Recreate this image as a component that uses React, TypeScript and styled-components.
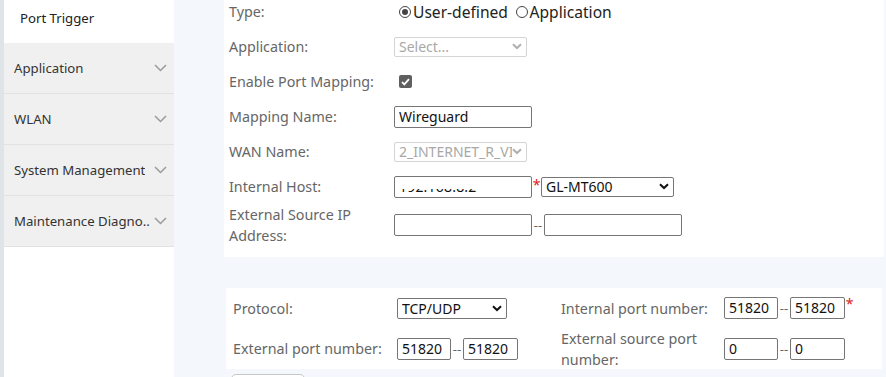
import React from "react";
import styled, { createGlobalStyle } from "styled-components";

const Global = createGlobalStyle`
  html, body { margin: 0; padding: 0; overflow: hidden; }
  body { font-family: "Noto Sans", "Open Sans", sans-serif; background: #f4f7fb; }
  * { box-sizing: border-box; }
`;

const Page = styled.div`
  display: flex;
  width: 886px;
  height: 377px;
  overflow: hidden;
  background: #f4f7fb;
`;

const EdgeStrip = styled.div`
  width: 4px;
  flex: none;
  background: #dfe4e9;
`;

const Sidebar = styled.nav`
  width: 170px;
  flex: none;
  background: #fff;
  display: flex;
  flex-direction: column;
`;

const SubItem = styled.div`
  height: 43px;
  display: flex;
  align-items: center;
  padding: 0 0 7px 16px;
  font-size: 13.2px;
  color: #222;
  background: #fff;
`;

const MenuItem = styled.div`
  height: 51px;
  display: flex;
  align-items: center;
  justify-content: space-between;
  padding: 0 7px 0 10px;
  background: #f0f0f0;
  border-bottom: 1px solid #e2e2e2;
  font-size: 13.2px;
  color: #333;
`;

const MenuText = styled.span`
  white-space: nowrap;
  overflow: hidden;
  max-width: 138px;
`;

const Chevron = () => (
  <svg width="13" height="8" viewBox="0 0 13 8" fill="none">
    <path d="M1 1l5.5 5.5L12 1" stroke="#9a9a9a" strokeWidth="1.5" />
  </svg>
);

const Main = styled.main`
  flex: 1;
  padding-left: 50px;
  display: flex;
  flex-direction: column;
`;

const TopCard = styled.section`
  margin-top: -6px;
  width: 660px;
  background: #fff;
  padding: 0 0 18px 5px;
  display: grid;
  grid-template-columns: 165px auto;
  grid-auto-rows: 35px;
`;

const BottomCard = styled.section`
  margin-top: 31px;
  margin-left: 2px;
  width: 656px;
  background: #fff;
  padding: 0 0 0 7px;
  display: grid;
  grid-template-columns: 164px 164px 163px auto;
  grid-template-rows: 40px 41px;
`;

const Label = styled.div`
  display: flex;
  align-items: center;
  font-size: 14.3px;
  line-height: 21px;
  color: #666;
`;

const Field = styled.div`
  display: flex;
  align-items: center;
  font-size: 14px;
  color: #111;
`;

const TallRow = styled.div`
  grid-column: 1 / -1;
  display: grid;
  grid-template-columns: 165px auto;
  height: 42px;
`;

const RadioOpt = styled.label`
  display: inline-flex;
  align-items: center;
  gap: 2px;
  margin-left: 5px;
  margin-right: -1px;
  font-size: 15.6px;
  color: #222;
`;

const RadioDot = styled.span<{ $on?: boolean }>`
  width: 12px;
  height: 12px;
  border-radius: 50%;
  border: 1px solid #444;
  display: inline-flex;
  align-items: center;
  justify-content: center;
  &::after {
    content: "";
    width: 6px;
    height: 6px;
    border-radius: 50%;
    background: ${(p) => (p.$on ? "#444" : "transparent")};
  }
`;

const Check = styled.span`
  margin-left: 5px;
  width: 13px;
  height: 13px;
  border-radius: 2px;
  background: #5f5f5f;
  display: inline-flex;
  align-items: center;
  justify-content: center;
`;

const FakeSelect = styled.div<{ $w: number; $disabled?: boolean; $h?: number }>`
  width: ${(p) => p.$w}px;
  height: ${(p) => p.$h ?? 20}px;
  border: 1px solid ${(p) => (p.$disabled ? "#d4d4d4" : "#767676")};
  border-radius: 2px;
  display: flex;
  align-items: center;
  justify-content: space-between;
  padding: 0 4px 0 4px;
  font-size: 14px;
  color: ${(p) => (p.$disabled ? "#a8a8a8" : "#111")};
  background: #fff;
  white-space: nowrap;
  overflow: hidden;
`;

const SelText = styled.span`
  overflow: hidden;
`;

const Caret = ({ color }: { color: string }) => (
  <svg width="10" height="7" viewBox="0 0 10 7" style={{ flex: "none" }}>
    <path d="M1 1.2l4 3.8 4-3.8" stroke={color} strokeWidth="2" fill="none" />
  </svg>
);

const TextBox = styled.div<{ $w: number }>`
  width: ${(p) => p.$w}px;
  height: 22px;
  border: 1px solid #767676;
  border-radius: 2px;
  padding: 0 4px;
  font-size: 14px;
  line-height: 20px;
  color: #111;
  background: #fff;
  overflow: hidden;
  white-space: nowrap;
`;

const Clipped = styled.span`
  display: block;
  clip-path: inset(12.5px 0 0 0);
  letter-spacing: 0.2px;
`;

const Dash = styled.span`
  width: 12px;
  text-align: center;
  font-size: 13px;
  color: #666;
`;

const Star = styled.span`
  color: #e02020;
  font-size: 14px;
  width: 9px;
  text-align: center;
  align-self: flex-start;
  margin-top: 6px;
`;

const AddBtn = styled.button`
  margin: 5px 0 0 7px;
  width: 74px;
  height: 32px;
  padding-top: 10px;
  background: #fff;
  border: 1px solid #c8c8c8;
  border-radius: 5px;
  font-family: inherit;
  font-size: 13px;
`;

export default function App() {
  return (
    <>
      <Global />
      <Page>
        <EdgeStrip />
        <Sidebar>
          <SubItem>Port Trigger</SubItem>
          {["Application", "WLAN", "System Management", "Maintenance Diagno.."].map((t) => (
            <MenuItem key={t}>
              <MenuText>{t}</MenuText>
              <Chevron />
            </MenuItem>
          ))}
        </Sidebar>
        <Main>
          <TopCard>
            <Label>Type:</Label>
            <Field>
              <RadioOpt>
                <RadioDot $on />
                User-defined
              </RadioOpt>
              &nbsp;
              <RadioOpt>
                <RadioDot />
                Application
              </RadioOpt>
            </Field>

            <Label>Application:</Label>
            <Field>
              <FakeSelect $w={133} $disabled>
                <SelText>Select...</SelText>
                <Caret color="#b0b0b0" />
              </FakeSelect>
            </Field>

            <Label>Enable Port Mapping:</Label>
            <Field>
              <Check>
                <svg width="9" height="8" viewBox="0 0 9 8">
                  <path d="M1 4l2.3 2.4L8 1.2" stroke="#fff" strokeWidth="1.8" fill="none" />
                </svg>
              </Check>
            </Field>

            <Label>Mapping Name:</Label>
            <Field>
              <TextBox $w={138}>Wireguard</TextBox>
            </Field>

            <Label>WAN Name:</Label>
            <Field>
              <FakeSelect $w={133} $disabled>
                <SelText>2_INTERNET_R_VI</SelText>
                <Caret color="#b0b0b0" />
              </FakeSelect>
            </Field>

            <Label>Internal Host:</Label>
            <Field>
              <TextBox $w={138}>
                <Clipped>192.168.8.2</Clipped>
              </TextBox>
              <Star>*</Star>
              <FakeSelect $w={133}>
                <SelText>GL-MT600</SelText>
                <Caret color="#111" />
              </FakeSelect>
            </Field>

            <TallRow>
              <Label>
                External Source IP
                <br />
                Address:
              </Label>
              <Field>
                <TextBox $w={138} />
                <Dash>--</Dash>
                <TextBox $w={138} />
              </Field>
            </TallRow>
          </TopCard>

          <BottomCard>
            <Label>Protocol:</Label>
            <Field>
              <FakeSelect $w={110} $h={21}>
                <SelText>TCP/UDP</SelText>
                <Caret color="#111" />
              </FakeSelect>
            </Field>
            <Label>Internal port number:</Label>
            <Field>
              <TextBox $w={54}>51820</TextBox>
              <Dash>--</Dash>
              <TextBox $w={55}>51820</TextBox>
              <Star>*</Star>
            </Field>

            <Label>External port number:</Label>
            <Field>
              <TextBox $w={54}>51820</TextBox>
              <Dash>--</Dash>
              <TextBox $w={55}>51820</TextBox>
            </Field>
            <Label>
              External source port
              <br />
              number:
            </Label>
            <Field>
              <TextBox $w={54}>0</TextBox>
              <Dash>--</Dash>
              <TextBox $w={55}>0</TextBox>
            </Field>
          </BottomCard>
          <AddBtn>Add</AddBtn>
        </Main>
      </Page>
    </>
  );
}
